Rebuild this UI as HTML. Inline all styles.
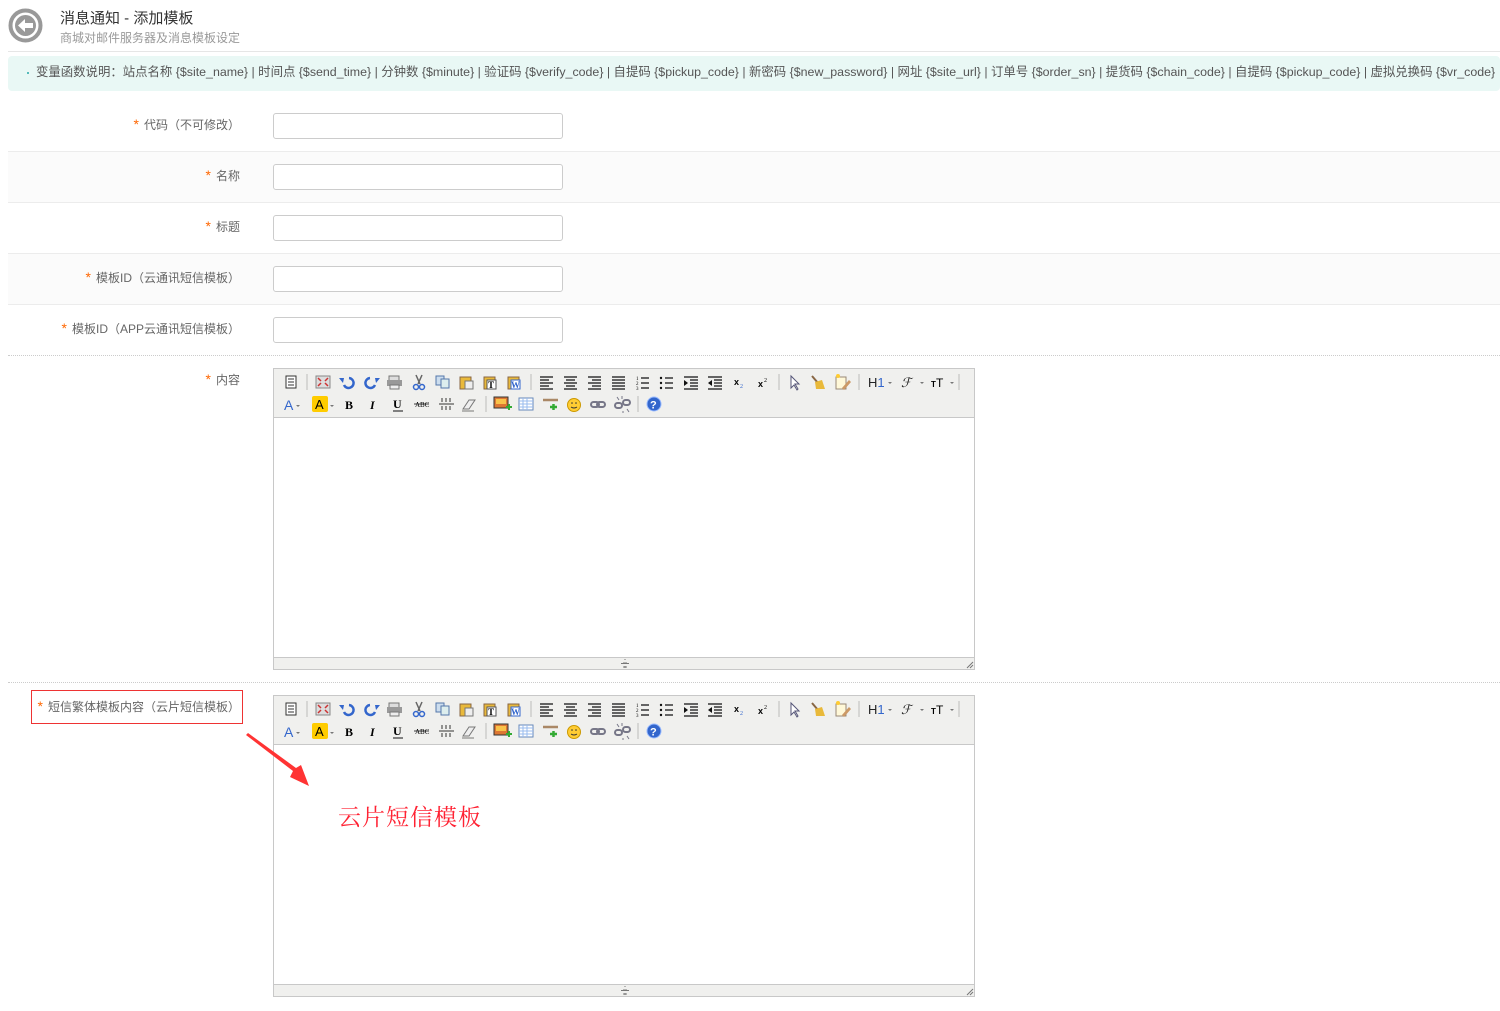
<!DOCTYPE html>
<html><head><meta charset="utf-8">
<style>
*{margin:0;padding:0;box-sizing:border-box}
body{width:1500px;height:1011px;background:#fff;font-family:"Liberation Sans","Noto Sans CJK SC",sans-serif;position:relative;overflow:hidden;color:#666}
.a{position:absolute}
.title{left:60px;top:7px;font-size:15px;color:#333}
.sub{left:60px;top:29px;font-size:12px;color:#999}
.notice{left:8px;top:56px;width:1492px;height:35px;background:#e9f8f5;border-radius:4px;font-size:12.4px;line-height:33px;color:#555;padding-left:28px;white-space:nowrap;overflow:hidden}
.notice:before{content:"";position:absolute;left:19px;top:16px;width:2px;height:2px;background:#5bb}
.row{position:absolute;left:8px;width:1492px;height:51px;border-bottom:1px solid #ececec}
.lbl{position:absolute;right:1260px;font-size:12px;color:#666;white-space:nowrap;text-align:right}
.lbl b{color:#f60;font-weight:normal;margin-right:5px;font-size:14px}
.inp{position:absolute;left:273px;width:290px;height:26px;border:1px solid #ccc;border-radius:3px;background:#fff}
.ed{position:absolute;left:273px;width:702px;border:1px solid #c8c8c8;background:#fff}
.tb{height:49px;background:#f0f0ee;border-bottom:1px solid #c8c8c8;position:relative}
.st{position:absolute;left:0;right:0;bottom:0;height:12px;background:#f0f0ee;border-top:1px solid #c8c8c8}
.dot{position:absolute;left:8px;width:1492px;border-top:1px dotted #ccc}
</style></head><body>
<svg class="a" style="left:8px;top:8px" width="35" height="35" viewBox="0 0 35 35"><circle cx="17.5" cy="17.5" r="15" fill="none" stroke="#999" stroke-width="4"/><circle cx="17.5" cy="17.5" r="10.5" fill="#999"/><path d="M10 17.5 L17 11 V15 H25 V20 H17 V24 Z" fill="#fff"/></svg>
<div class="a title">消息通知 - 添加模板</div>
<div class="a sub">商城对邮件服务器及消息模板设定</div>
<div class="a" style="left:8px;top:51px;width:1492px;border-top:1px solid #e6e6e6"></div>
<div class="a notice">变量函数说明：站点名称 {$site_name} | 时间点 {$send_time} | 分钟数 {$minute} | 验证码 {$verify_code} | 自提码 {$pickup_code} | 新密码 {$new_password} | 网址 {$site_url} | 订单号 {$order_sn} | 提货码 {$chain_code} | 自提码 {$pickup_code} | 虚拟兑换码 {$vr_code}</div>

<div class="row" style="top:101px"></div>
<div class="row" style="top:152px;background:#fbfbfb"></div>
<div class="row" style="top:203px"></div>
<div class="row" style="top:254px;background:#fbfbfb"></div>
<div class="row" style="top:305px;border-bottom:none"></div>
<div class="dot" style="top:355px"></div>
<div class="dot" style="top:682px"></div>

<div class="lbl" style="top:116px"><b>*</b>代码（不可修改）</div>
<div class="lbl" style="top:167px"><b>*</b>名称</div>
<div class="lbl" style="top:218px"><b>*</b>标题</div>
<div class="lbl" style="top:269px"><b>*</b>模板ID（云通讯短信模板）</div>
<div class="lbl" style="top:320px"><b>*</b>模板ID（APP云通讯短信模板）</div>
<div class="lbl" style="top:371px"><b>*</b>内容</div>
<div class="a" style="left:31px;top:690px;width:212px;height:34px;border:1px solid #e33"></div>
<div class="lbl" style="top:698px"><b>*</b>短信繁体模板内容（云片短信模板）</div>

<div class="inp" style="top:113px"></div>
<div class="inp" style="top:164px"></div>
<div class="inp" style="top:215px"></div>
<div class="inp" style="top:266px"></div>
<div class="inp" style="top:317px"></div>

<svg width="0" height="0" style="position:absolute"><defs>
<g id="tb" font-family="Liberation Serif,serif">
<g stroke="#bbb"><line x1="33" y1="5" x2="33" y2="21"/><line x1="257" y1="5" x2="257" y2="21"/><line x1="505" y1="5" x2="505" y2="21"/><line x1="585" y1="5" x2="585" y2="21"/><line x1="685" y1="5" x2="685" y2="21"/><line x1="212" y1="27" x2="212" y2="43"/><line x1="364" y1="27" x2="364" y2="43"/></g>
<rect x="12" y="7" width="10" height="12" fill="#fff" stroke="#333"/><path d="M14 10h6M14 13h6M14 16h6" stroke="#333"/>
<rect x="42" y="7" width="14" height="12" fill="#ddd" stroke="#888"/><path d="M44 9l3 3M54 9l-3 3M44 17l3-3M54 17l-3-3" stroke="#c33" stroke-width="1.5"/>
<path d="M75 9a5 5 0 1 1-5 7" fill="none" stroke="#36c" stroke-width="2.5"/><path d="M65 9l5 0-1 5z" fill="#36c"/>
<path d="M96 9a5 5 0 1 0 5 7" fill="none" stroke="#36c" stroke-width="2.5"/><path d="M106 9l-5 0 1 5z" fill="#36c"/>
<rect x="115" y="7" width="10" height="5" fill="#ddd" stroke="#777"/><rect x="113" y="11" width="15" height="6" fill="#999"/><rect x="116" y="16" width="9" height="4" fill="#eee" stroke="#777"/>
<path d="M142 6l4 9M148 6l-4 9" stroke="#666" stroke-width="1.5"/><circle cx="142" cy="18" r="2.5" fill="none" stroke="#36c" stroke-width="1.5"/><circle cx="148" cy="18" r="2.5" fill="none" stroke="#36c" stroke-width="1.5"/>
<rect x="162" y="7" width="8" height="9" fill="#cde" stroke="#57a"/><rect x="167" y="10" width="8" height="9" fill="#dee" stroke="#57a"/>
<rect x="186" y="8" width="11" height="12" fill="#e9b93a" stroke="#864"/><rect x="191" y="12" width="8" height="8" fill="#eee" stroke="#777"/>
<rect x="210" y="8" width="11" height="12" fill="#e9b93a" stroke="#864"/><rect x="213" y="11" width="9" height="9" fill="#fff" stroke="#555"/><text x="214" y="19" font-size="9" font-weight="bold">T</text>
<rect x="234" y="8" width="11" height="12" fill="#e9b93a" stroke="#864"/><rect x="237" y="11" width="9" height="9" fill="#fff" stroke="#36c"/><text x="237" y="19" font-size="9" font-weight="bold" fill="#36c">W</text>
<g stroke="#111" stroke-width="1.2"><path d="M266 8h13M266 11h9M266 14h13M266 17h9M266 20h13"/><path d="M290 8h13M292 11h9M290 14h13M292 17h9M290 20h13"/><path d="M314 8h13M318 11h9M314 14h13M318 17h9M314 20h13"/><path d="M338 8h13M338 11h13M338 14h13M338 17h13M338 20h13"/><path d="M367 9h8M367 14h8M367 19h8M391 9h8M391 14h8M391 19h8"/><path d="M410 8h14M416 11h8M416 14h8M416 17h8M410 20h14M434 8h14M440 11h8M440 14h8M440 17h8M434 20h14"/></g>
<text x="362" y="11" font-size="5">1</text><text x="362" y="16" font-size="5">2</text><text x="362" y="21" font-size="5">3</text>
<g fill="#111"><circle cx="387" cy="9" r="1.2"/><circle cx="387" cy="14" r="1.2"/><circle cx="387" cy="19" r="1.2"/><path d="M410 11l4 3-4 3z"/><path d="M438 11l-4 3 4 3z"/></g>
<text x="460" y="16" font-size="9" font-family="Liberation Sans" font-weight="bold">x</text><text x="466" y="19" font-size="6" fill="#36c">2</text>
<text x="484" y="18" font-size="9" font-family="Liberation Sans" font-weight="bold">x</text><text x="490" y="13" font-size="6">2</text>
<path d="M517 7v12l3-3 3 5 1-1-3-5h4z" fill="#fff" stroke="#557"/>
<path d="M538 7l6 7" stroke="#864" stroke-width="2"/><path d="M541 13l7-2 3 9-9 0z" fill="#e9b93a"/>
<rect x="562" y="8" width="10" height="12" fill="#fff8d8" stroke="#987"/><path d="M568 19l7-8 2 2-7 8z" fill="#c96"/><circle cx="564" cy="7" r="2" fill="#fc3"/>
<text x="594" y="18" font-size="13" font-family="Liberation Sans" fill="#222">H<tspan fill="#36c">1</tspan></text><path d="M614 13h4l-2 2z" fill="#777"/>
<text x="627" y="18" font-size="13" font-style="italic" fill="#222">ℱ</text><path d="M646 13h4l-2 2z" fill="#777"/>
<text x="657" y="18" font-size="8" font-family="Liberation Sans" font-weight="bold">T</text><text x="662" y="18" font-size="12" font-family="Liberation Sans">T</text><path d="M676 13h4l-2 2z" fill="#777"/>
<text x="10" y="41" font-size="14" font-family="Liberation Sans" fill="#36c">A</text><path d="M22 36h4l-2 2z" fill="#777"/>
<rect x="38" y="27" width="16" height="16" rx="2" fill="#fc0"/><text x="41" y="40" font-size="13" font-family="Liberation Sans">A</text><path d="M56 36h4l-2 2z" fill="#777"/>
<text x="71" y="40" font-size="12" font-weight="bold">B</text>
<text x="96" y="40" font-size="12" font-weight="bold" font-style="italic">I</text>
<text x="119" y="39" font-size="12" font-weight="bold">U</text><path d="M119 42h10" stroke="#111"/>
<text x="141" y="38" font-size="7">ABC</text><path d="M140 35h15" stroke="#111" stroke-width=".8"/>
<path d="M165 35h15M168 29v4M172 29v4M176 29v4M168 37v4M172 37v4M176 37v4" stroke="#333"/>
<path d="M189 40l6-9h6l-6 9z" fill="#eee" stroke="#777"/><path d="M188 42h12" stroke="#777"/>
<rect x="220" y="28" width="14" height="11" fill="#d73" stroke="#333"/><rect x="222" y="30" width="10" height="5" fill="#f9c34a"/><path d="M232 38h6M235 35v6" stroke="#3a3" stroke-width="2"/>
<rect x="245" y="29" width="14" height="12" fill="#fff" stroke="#68b"/><path d="M245 32h14M245 35h14M245 38h14M249 29v12M253 29v12" stroke="#9be"/>
<path d="M269 31h15" stroke="#a86" stroke-width="2.5"/><path d="M276 38h7M279.5 35v6" stroke="#3a3" stroke-width="2.5"/>
<circle cx="300" cy="36" r="6.5" fill="#fc3" stroke="#c90"/><circle cx="298" cy="34" r=".8" fill="#333"/><circle cx="302" cy="34" r=".8" fill="#333"/><path d="M297 38q3 2 6 0" fill="none" stroke="#333"/>
<rect x="317" y="33" width="8" height="5" rx="2.5" fill="none" stroke="#778" stroke-width="2"/><rect x="323" y="33" width="8" height="5" rx="2.5" fill="none" stroke="#778" stroke-width="2"/>
<rect x="341" y="34" width="7" height="5" rx="2.5" fill="none" stroke="#778" stroke-width="2"/><rect x="349" y="31" width="7" height="5" rx="2.5" fill="none" stroke="#778" stroke-width="2"/><path d="M343 28l2 3M353 40l2 3M348 27v3M349 42v2" stroke="#778"/>
<circle cx="380" cy="35" r="7" fill="#36c" stroke="#9bf"/><text x="376" y="39.5" font-size="11" font-family="Liberation Sans" font-weight="bold" fill="#fff">?</text>
</g></defs></svg>

<div class="ed" style="top:368px;height:302px">
<div class="tb"><svg width="700" height="49"><use href="#tb"/></svg></div>
<div class="st"><svg class="a" style="left:344px;top:1px" width="14" height="9"><path d="M5 4h4M7 0v1M3 4.5h8M5 8h4M7 7v2" stroke="#777"/></svg><svg class="a" style="right:0;bottom:0" width="8" height="8"><path d="M1 7l6-6M4 7l3-3" stroke="#777"/></svg></div>
</div>

<div class="ed" style="top:695px;height:302px">
<div class="tb"><svg width="700" height="49"><use href="#tb"/></svg></div>
<div class="a" style="left:64px;top:103px;font-size:23px;color:#f23;font-family:'Liberation Serif','Noto Serif CJK SC',serif;letter-spacing:1px">云片短信模板</div>
<div class="st"><svg class="a" style="left:344px;top:1px" width="14" height="9"><path d="M5 4h4M7 0v1M3 4.5h8M5 8h4M7 7v2" stroke="#777"/></svg><svg class="a" style="right:0;bottom:0" width="8" height="8"><path d="M1 7l6-6M4 7l3-3" stroke="#777"/></svg></div>
</div>

<svg class="a" style="left:0;top:0" width="400" height="800" viewBox="0 0 400 800"><path d="M246 735 L293 771 L290 777 L309 786 L301 765 L296 768 L248 733 Z" fill="#f33"/></svg>
</body></html>
